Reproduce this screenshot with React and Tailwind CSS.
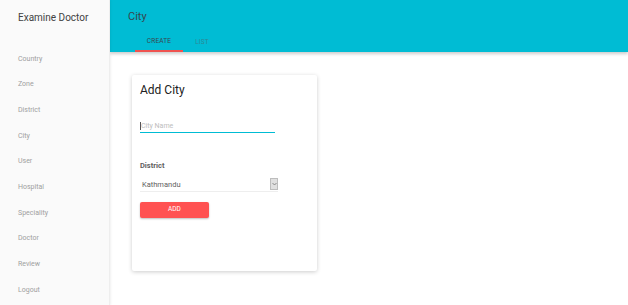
import React from 'react';

const navItems = ['Country', 'Zone', 'District', 'City', 'User', 'Hospital', 'Speciality', 'Doctor', 'Review', 'Logout'];

const App = () => {
    return (
        <div className="flex h-[305px] w-[628px] overflow-hidden bg-white font-['Roboto',sans-serif]">
            {/* Sidebar */}
            <div className="w-[110px] shrink-0 bg-[#fafafa] border-r border-[#eeeeee] shadow-[1px_0_2px_rgba(0,0,0,0.06)] z-10">
                <div className="pl-[18px] pt-[10px] h-[46px] text-[10px] text-[#424242]">Examine Doctor</div>
                <ul className="flex flex-col">
                    {navItems.map((item) => (
                        <li key={item} className="pl-[18px] h-[25.7px] flex items-center text-[7px] text-[#a0a0a0]">
                            {item}
                        </li>
                    ))}
                </ul>
            </div>

            {/* Main */}
            <div className="flex-1 flex flex-col">
                <div className="h-[52px] bg-[#00bcd4] shadow-[0_2px_3px_rgba(0,0,0,0.2)] flex flex-col">
                    <div className="pl-[18px] pt-[9px] h-[33px] text-[11px] text-[#37474f]">City</div>
                    <div className="flex pl-[25px] text-[6.5px] tracking-wide">
                        <div className="w-[48px] h-[19px] flex items-center justify-center text-[#37474f] border-b-[2px] border-[#ef5350]">CREATE</div>
                        <div className="w-[38px] h-[19px] flex items-center justify-center text-[#2f8894]">LIST</div>
                    </div>
                </div>

                <div className="pl-[22px] pt-[23px]">
                    <div className="w-[185px] h-[196px] bg-white rounded-[2px] shadow-[0_1px_4px_rgba(0,0,0,0.2)] px-[8px] pt-[6px]">
                        <div className="text-[12px] text-[#212121]">Add City</div>
                        <div className="mt-[22px] w-[135px] border-b border-[#00bcd4] pb-0 flex items-center">
                            <span className="w-px h-[8px] bg-[#555]"></span>
                            <span className="text-[7px] text-[#bdbdbd]">City Name</span>
                        </div>
                        <div className="mt-[27px] text-[7.5px] font-bold text-[#616161]">District</div>
                        <div className="mt-[7px] w-[138px] h-[14px] flex items-center justify-between border-b border-[#eeeeee]">
                            <span className="pl-[2px] text-[7.5px] text-[#616161]">Kathmandu</span>
                            <span className="w-[8px] h-[12px] bg-[#e0e0e0] border border-[#bdbdbd] flex items-center justify-center">
                                <svg width="5" height="4" viewBox="0 0 5 4"><path d="M0.5 1 L2.5 3 L4.5 1" fill="none" stroke="#777" strokeWidth="0.8" /></svg>
                            </span>
                        </div>
                        <button className="mt-[10px] w-[69px] h-[16px] bg-[#ff5252] rounded-[2px] shadow-[0_1px_2px_rgba(0,0,0,0.25)] text-white text-[6.5px] flex items-center justify-center">
                            ADD
                        </button>
                    </div>
                </div>
            </div>
        </div>
    );
};

export default App;
